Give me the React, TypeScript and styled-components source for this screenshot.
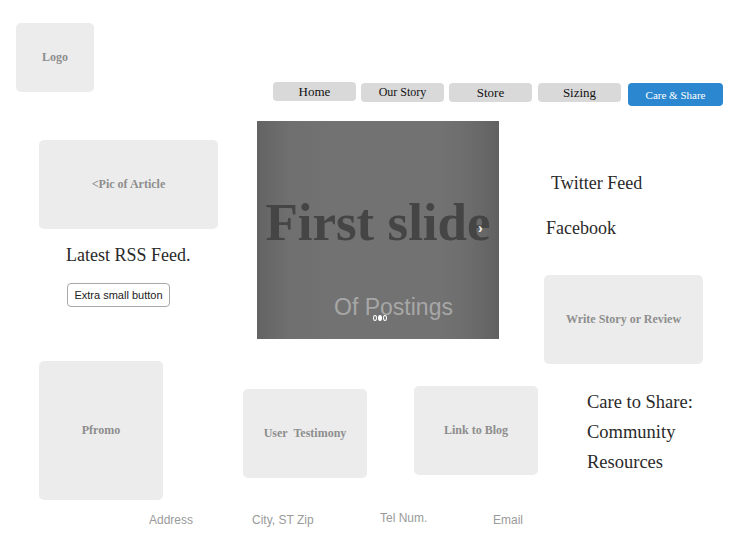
import React from "react";
import styled, { createGlobalStyle } from "styled-components";

const Global = createGlobalStyle`
  html, body { margin: 0; padding: 0; background: #ffffff; }
  body { font-family: "Liberation Serif", "Times New Roman", serif; color: #222; }
  * { box-sizing: border-box; }
`;

const Page = styled.div`
  width: 756px;
  height: 554px;
  overflow: hidden;
  position: relative;
`;

const Header = styled.header`
  display: flex;
  align-items: flex-start;
  padding: 23px 0 0 16px;
  height: 121px;
`;

const Placeholder = styled.div<{ $w: number; $h: number; $ml?: number; $mt?: number }>`
  width: ${(p) => p.$w}px;
  height: ${(p) => p.$h}px;
  margin-left: ${(p) => p.$ml ?? 0}px;
  margin-top: ${(p) => p.$mt ?? 0}px;
  background: #ececec;
  border-radius: 5px;
  display: flex;
  align-items: center;
  justify-content: center;
  flex-shrink: 0;
  font-family: "Liberation Serif", "Times New Roman", serif;
  font-weight: bold;
  font-size: 12px;
  color: #8e8e8e;
  text-align: center;
`;

const Nav = styled.nav`
  display: flex;
  align-items: flex-start;
  gap: 5px;
  margin-left: 179px;
  margin-top: 59px;
`;

const NavButton = styled.div<{ $size: number; $mt?: number; $ml?: number }>`
  width: 83px;
  height: 19px;
  margin-top: ${(p) => p.$mt ?? 0}px;
  margin-left: ${(p) => p.$ml ?? 0}px;
  background: #d9d9d9;
  border-radius: 4px;
  display: flex;
  align-items: center;
  justify-content: center;
  font-size: ${(p) => p.$size}px;
  color: #111;
`;

const PrimaryButton = styled.div`
  width: 95px;
  height: 23px;
  margin-top: 1px;
  margin-left: 2px;
  background: #2b88d0;
  border-radius: 4px;
  display: flex;
  align-items: center;
  justify-content: center;
  font-size: 11px;
  color: #ffffff;
`;

const Main = styled.main`
  display: flex;
  align-items: flex-start;
  padding-left: 39px;
  height: 379px;
`;

const Column = styled.div<{ $w: number; $ml?: number }>`
  width: ${(p) => p.$w}px;
  margin-left: ${(p) => p.$ml ?? 0}px;
  display: flex;
  flex-direction: column;
  align-items: flex-start;
  flex-shrink: 0;
`;

const Heading = styled.div<{ $ml?: number; $mt?: number }>`
  font-size: 18px;
  line-height: 20px;
  color: #2a2a2a;
  margin-left: ${(p) => p.$ml ?? 0}px;
  margin-top: ${(p) => p.$mt ?? 0}px;
  white-space: nowrap;
`;

const SmallButton = styled.button`
  margin: 18px 0 0 28px;
  width: 103px;
  height: 24px;
  padding: 0;
  border: 1px solid #a8a8a8;
  border-radius: 4px;
  background: #ffffff;
  font-family: "Liberation Sans", Arial, sans-serif;
  font-size: 11px;
  color: #222;
`;

const Carousel = styled.div`
  position: relative;
  margin-left: 14px;
  width: 242px;
  height: 218px;
  background: linear-gradient(
    to right,
    #636363 0%,
    #686868 5%,
    #6f6f6f 13%,
    #727272 30%,
    #727272 75%,
    #6e6e6e 85%,
    #686868 93%,
    #606060 100%
  );
  display: flex;
  flex-direction: column;
  align-items: center;
  overflow: hidden;
`;

const SlideTitle = styled.div`
  margin-top: 73px;
  font-weight: bold;
  font-size: 53px;
  line-height: 56px;
  color: #454545;
  white-space: nowrap;
`;

const Caption = styled.div`
  margin-top: 44px;
  padding-left: 31px;
  font-family: "Liberation Sans", Arial, sans-serif;
  font-size: 23px;
  line-height: 26px;
  color: #a7a7a7;
  white-space: nowrap;
`;

const Chevron = styled.span`
  position: absolute;
  left: 221px;
  top: 99px;
  font-family: "Liberation Sans", Arial, sans-serif;
  font-weight: bold;
  font-size: 14px;
  color: #f0f0f0;
`;

const Indicators = styled.div`
  position: absolute;
  left: 116px;
  top: 194px;
  display: flex;
  gap: 1px;
`;

const Dot = styled.span<{ $active?: boolean }>`
  width: 4px;
  height: 6px;
  border-radius: 50%;
  border: 1px solid #ffffff;
  background: ${(p) => (p.$active ? "#ffffff" : "transparent")};
`;

const BoxRow = styled.div`
  display: flex;
  align-items: flex-start;
  gap: 47px;
  margin-top: 47px;
`;

const Stack = styled.div`
  margin: 23px 0 0 43px;
  display: flex;
  flex-direction: column;
`;

const StackLine = styled.div`
  font-size: 18.5px;
  line-height: 30px;
  color: #2a2a2a;
  white-space: nowrap;
`;

const Footer = styled.footer`
  display: grid;
  grid-template-columns: 103px 128px 113px auto;
  padding-left: 149px;
  margin-top: 13px;
  font-family: "Liberation Sans", Arial, sans-serif;
  font-size: 12px;
  line-height: 14px;
  color: #9a9a9a;
`;

const FooterItem = styled.div<{ $mt?: number }>`
  margin-top: ${(p) => p.$mt ?? 0}px;
  white-space: nowrap;
`;

export default function App() {
  return (
    <Page>
      <Global />
      <Header>
        <Placeholder $w={78} $h={69}>Logo</Placeholder>
        <Nav>
          <NavButton $size={13}>Home</NavButton>
          <NavButton $size={12} $mt={1}>Our Story</NavButton>
          <NavButton $size={13} $mt={1}>Store</NavButton>
          <NavButton $size={13} $mt={1} $ml={1}>Sizing</NavButton>
          <PrimaryButton>Care &amp; Share</PrimaryButton>
        </Nav>
      </Header>
      <Main>
        <Column $w={179}>
          <Placeholder $w={179} $h={89} $mt={19}>&lt;Pic of Article</Placeholder>
          <Heading $ml={27} $mt={16}>Latest RSS Feed.</Heading>
          <SmallButton>Extra small button</SmallButton>
          <Placeholder $w={124} $h={139} $mt={54}>Pfromo</Placeholder>
        </Column>
        <Column $w={295} $ml={25}>
          <Carousel>
            <SlideTitle>First slide</SlideTitle>
            <Caption>Of Postings</Caption>
            <Chevron>›</Chevron>
            <Indicators>
              <Dot />
              <Dot $active />
              <Dot />
            </Indicators>
          </Carousel>
          <BoxRow>
            <Placeholder $w={124} $h={89} $mt={3}>User&nbsp; Testimony</Placeholder>
            <Placeholder $w={124} $h={89}>Link to Blog</Placeholder>
          </BoxRow>
        </Column>
        <Column $w={170} $ml={6}>
          <Heading $ml={7} $mt={52}>Twitter Feed</Heading>
          <Heading $ml={2} $mt={25}>Facebook</Heading>
          <Placeholder $w={159} $h={89} $mt={37}>Write Story or Review</Placeholder>
          <Stack>
            <StackLine>Care to Share:</StackLine>
            <StackLine>Community</StackLine>
            <StackLine>Resources</StackLine>
          </Stack>
        </Column>
      </Main>
      <Footer>
        <FooterItem>Address</FooterItem>
        <FooterItem>City, ST Zip</FooterItem>
        <FooterItem $mt={-2}>Tel Num.</FooterItem>
        <FooterItem>Email</FooterItem>
      </Footer>
    </Page>
  );
}
